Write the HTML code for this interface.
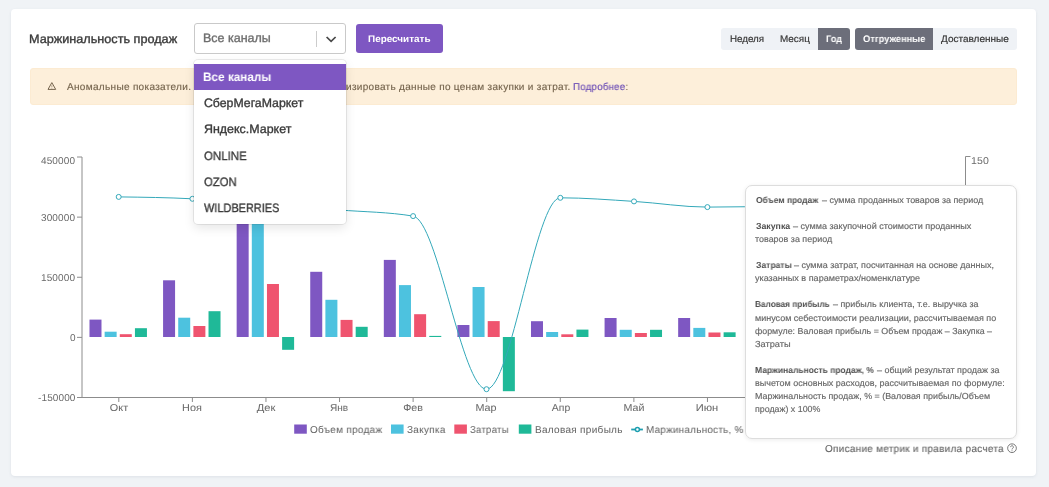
<!DOCTYPE html>
<html><head><meta charset="utf-8"><title>chart</title>
<style>
*{box-sizing:border-box;margin:0;padding:0}
html,body{width:1049px;height:487px;overflow:hidden;background:#f0f3f6;font-family:"Liberation Sans", sans-serif;}
.abs{position:absolute}
.card{position:absolute;left:11px;top:9px;width:1025px;height:466.5px;background:#fff;border-radius:4px;box-shadow:0 1px 3px rgba(60,80,110,.10)}
.t{position:absolute;white-space:nowrap;will-change:transform;text-rendering:geometricPrecision}
.select{position:absolute;left:194px;top:23px;width:152px;height:31px;border:1px solid #c9c9c9;border-radius:3px;background:#fff}
.sep{position:absolute;left:316px;top:31px;width:1px;height:16px;background:#ccc}
.btn{position:absolute;left:356px;top:24px;width:87px;height:29px;background:#7e57c2;border-radius:3px}
.menu{position:absolute;left:194px;top:60px;width:152px;height:164px;background:#fff;border-radius:4px;box-shadow:0 0 0 1px rgba(0,0,0,.08),0 4px 11px rgba(0,0,0,.1)}
.hl{position:absolute;left:194px;top:64px;width:152px;height:25.8px;background:#7e57c2}
.alert{position:absolute;left:30px;top:68px;width:987px;height:37px;background:#fdefda;border:1px solid #fcebd2;border-radius:3px}
.tg{position:absolute;top:28px;height:22px;background:#eff2f6}
.tg.on{background:#6c6e7a}
.tip{position:absolute;left:745px;top:185px;width:272px;height:254px;background:#fff;border:1px solid #ddd;border-radius:7px;box-shadow:0 1px 4px rgba(0,0,0,.08)}
svg{position:absolute;left:0;top:0}
</style></head><body>
<div class="card"></div>
<div class="alert"></div>
<div class="t" style="font-size:10px;letter-spacing:0.3px;-webkit-text-stroke:0.15px;left:67.40px;transform-origin:0 50%;transform:scaleX(1.0045);top:80.00px;line-height:15.0px;"><span style="color:#75644d;font-weight:400">Аномальные показатели.</span></div>
<div class="t" style="font-size:10px;letter-spacing:0.3px;-webkit-text-stroke:0.15px;right:701.88px;transform-origin:100% 50%;top:80.00px;line-height:15.0px;"><span style="color:#75644d;font-weight:400">Рекомендуем актуал</span></div>
<div class="t" style="font-size:10px;letter-spacing:0.3px;-webkit-text-stroke:0.15px;left:346.10px;transform-origin:0 50%;transform:scaleX(1.0011);top:80.00px;line-height:15.0px;"><span style="color:#75644d;font-weight:400">изировать данные по ценам закупки и затрат.</span></div>
<div class="t" style="font-size:10px;letter-spacing:0.3px;-webkit-text-stroke:0.15px;left:573.28px;transform-origin:0 50%;transform:scaleX(0.9614);top:80.00px;line-height:15.0px;"><span style="color:#6a4bb5;font-weight:400">Подробнее</span><span style="color:#75644d;font-weight:400">:</span></div>
<svg width="1049" height="487" viewBox="0 0 1049 487">
<rect x="89.49" y="319.60" width="12" height="17.40" fill="#7e57c2"/>
<rect x="104.64" y="331.70" width="12" height="5.30" fill="#4dc2df"/>
<rect x="119.79" y="334.20" width="12" height="2.80" fill="#ef546f"/>
<rect x="134.94" y="328.20" width="12" height="8.80" fill="#1fb998"/>
<rect x="163.07" y="280.30" width="12" height="56.70" fill="#7e57c2"/>
<rect x="178.22" y="317.70" width="12" height="19.30" fill="#4dc2df"/>
<rect x="193.38" y="326.00" width="12" height="11.00" fill="#ef546f"/>
<rect x="208.52" y="311.20" width="12" height="25.80" fill="#1fb998"/>
<rect x="236.66" y="150.00" width="12" height="187.00" fill="#7e57c2"/>
<rect x="251.81" y="165.00" width="12" height="172.00" fill="#4dc2df"/>
<rect x="266.96" y="284.00" width="12" height="53.00" fill="#ef546f"/>
<rect x="282.11" y="337.00" width="12" height="12.80" fill="#1fb998"/>
<rect x="310.24" y="271.80" width="12" height="65.20" fill="#7e57c2"/>
<rect x="325.39" y="299.80" width="12" height="37.20" fill="#4dc2df"/>
<rect x="340.54" y="319.90" width="12" height="17.10" fill="#ef546f"/>
<rect x="355.69" y="326.80" width="12" height="10.20" fill="#1fb998"/>
<rect x="383.82" y="259.90" width="12" height="77.10" fill="#7e57c2"/>
<rect x="398.97" y="285.10" width="12" height="51.90" fill="#4dc2df"/>
<rect x="414.12" y="314.20" width="12" height="22.80" fill="#ef546f"/>
<rect x="429.27" y="335.90" width="12" height="1.10" fill="#1fb998"/>
<rect x="457.41" y="325.00" width="12" height="12.00" fill="#7e57c2"/>
<rect x="472.56" y="287.00" width="12" height="50.00" fill="#4dc2df"/>
<rect x="487.71" y="321.10" width="12" height="15.90" fill="#ef546f"/>
<rect x="502.86" y="337.00" width="12" height="54.20" fill="#1fb998"/>
<rect x="530.99" y="321.20" width="12" height="15.80" fill="#7e57c2"/>
<rect x="546.14" y="332.00" width="12" height="5.00" fill="#4dc2df"/>
<rect x="561.29" y="334.30" width="12" height="2.70" fill="#ef546f"/>
<rect x="576.44" y="329.60" width="12" height="7.40" fill="#1fb998"/>
<rect x="604.58" y="318.00" width="12" height="19.00" fill="#7e57c2"/>
<rect x="619.73" y="329.80" width="12" height="7.20" fill="#4dc2df"/>
<rect x="634.88" y="333.00" width="12" height="4.00" fill="#ef546f"/>
<rect x="650.03" y="329.80" width="12" height="7.20" fill="#1fb998"/>
<rect x="678.16" y="318.00" width="12" height="19.00" fill="#7e57c2"/>
<rect x="693.31" y="327.90" width="12" height="9.10" fill="#4dc2df"/>
<rect x="708.46" y="332.50" width="12" height="4.50" fill="#ef546f"/>
<rect x="723.61" y="332.30" width="12" height="4.70" fill="#1fb998"/>
<path d="M118.70,196.90C143.27,197.22,167.83,197.53,192.40,198.80C216.93,200.06,241.47,202.63,266.00,204.50C290.50,206.37,315.00,208.07,339.50,210.00C364.03,211.93,388.57,212.03,413.10,216.10C437.57,220.16,462.03,389.20,486.50,389.20C511.10,389.20,535.70,197.80,560.30,197.80C584.87,197.80,609.43,199.85,634.00,201.40C658.47,202.95,682.93,207.10,707.40,207.10C731.93,207.10,756.47,206.55,781.00,206.00" fill="none" stroke="#33a8b9" stroke-width="1"/>
<circle cx="118.70" cy="196.90" r="2.5" fill="#fff" stroke="#33a8b9" stroke-width="1"/>
<circle cx="192.40" cy="198.80" r="2.5" fill="#fff" stroke="#33a8b9" stroke-width="1"/>
<circle cx="266.00" cy="204.50" r="2.5" fill="#fff" stroke="#33a8b9" stroke-width="1"/>
<circle cx="339.50" cy="210.00" r="2.5" fill="#fff" stroke="#33a8b9" stroke-width="1"/>
<circle cx="413.10" cy="216.10" r="2.5" fill="#fff" stroke="#33a8b9" stroke-width="1"/>
<circle cx="486.50" cy="389.20" r="2.5" fill="#fff" stroke="#33a8b9" stroke-width="1"/>
<circle cx="560.30" cy="197.80" r="2.5" fill="#fff" stroke="#33a8b9" stroke-width="1"/>
<circle cx="634.00" cy="201.40" r="2.5" fill="#fff" stroke="#33a8b9" stroke-width="1"/>
<circle cx="707.40" cy="207.10" r="2.5" fill="#fff" stroke="#33a8b9" stroke-width="1"/>
<circle cx="781.00" cy="206.00" r="2.5" fill="#fff" stroke="#33a8b9" stroke-width="1"/>
<path d="M77,157H82V397.5" fill="none" stroke="#8c8c8c" stroke-width="1"/>
<path d="M77,217.125H82" stroke="#8c8c8c" stroke-width="1"/>
<path d="M77,277.25H82" stroke="#8c8c8c" stroke-width="1"/>
<path d="M77,337.375H82" stroke="#8c8c8c" stroke-width="1"/>
<path d="M77,397.5H82" stroke="#8c8c8c" stroke-width="1"/>
<path d="M82,397.5H965.5" stroke="#8c8c8c" stroke-width="1"/>
<path d="M118.79,397.5V402" stroke="#8c8c8c" stroke-width="1"/>
<path d="M192.38,397.5V402" stroke="#8c8c8c" stroke-width="1"/>
<path d="M265.96,397.5V402" stroke="#8c8c8c" stroke-width="1"/>
<path d="M339.54,397.5V402" stroke="#8c8c8c" stroke-width="1"/>
<path d="M413.12,397.5V402" stroke="#8c8c8c" stroke-width="1"/>
<path d="M486.71,397.5V402" stroke="#8c8c8c" stroke-width="1"/>
<path d="M560.29,397.5V402" stroke="#8c8c8c" stroke-width="1"/>
<path d="M633.88,397.5V402" stroke="#8c8c8c" stroke-width="1"/>
<path d="M707.46,397.5V402" stroke="#8c8c8c" stroke-width="1"/>
<path d="M781.04,397.5V402" stroke="#8c8c8c" stroke-width="1"/>
<path d="M854.62,397.5V402" stroke="#8c8c8c" stroke-width="1"/>
<path d="M928.21,397.5V402" stroke="#8c8c8c" stroke-width="1"/>
<path d="M970.5,156.5H965.5V397.5" fill="none" stroke="#8c8c8c" stroke-width="1"/>
<rect x="294.2" y="424.5" width="12.6" height="9.2" fill="#7e57c2"/>
<rect x="391.0" y="424.5" width="12.6" height="9.2" fill="#4dc2df"/>
<rect x="454.3" y="424.5" width="12.6" height="9.2" fill="#ef546f"/>
<rect x="518.8" y="424.5" width="12.6" height="9.2" fill="#1fb998"/>
<path d="M631.2,429.5H642.9" stroke="#1d9fb0" stroke-width="1.8"/>
<circle cx="637.4" cy="429.5" r="2.0" fill="#fff" stroke="#1d9fb0" stroke-width="1.5"/>
<path d="M48.0,89.4L51.85,82.6L55.7,89.4Z" fill="none" stroke="#75644d" stroke-width="1" stroke-linejoin="round"/>
<path d="M51.85,85.2V87.3M51.85,87.9V88.5" stroke="#75644d" stroke-width="0.7" opacity="0.8"/>
</svg>
<div class="select"></div><div class="sep"></div>
<svg width="1049" height="487" viewBox="0 0 1049 487" style="pointer-events:none">
<path d="M327.2,37.6L331.1,41.4L335,37.6" fill="none" stroke="#484848" stroke-width="1.7" stroke-linecap="square" stroke-linejoin="miter"/>
<circle cx="1012" cy="448.2" r="4.35" fill="none" stroke="#6a6a6a" stroke-width="0.9"/>
<path d="M1010.6,447.1a1.4,1.4 0 1 1 2.2,1.15c-0.55,0.35 -0.8,0.6 -0.8,1.2M1012,450.4v0.8" fill="none" stroke="#6a6a6a" stroke-width="0.9"/>
</svg>
<div class="btn"></div>
<div class="tg" style="left:721px;width:97px;border-radius:3px 0 0 3px"></div>
<div class="tg on" style="left:818px;width:32px;border-radius:0 3px 3px 0"></div>
<div class="tg on" style="left:855px;width:78px;border-radius:3px 0 0 3px"></div>
<div class="tg" style="left:933px;width:84px;border-radius:0 3px 3px 0"></div>
<div class="tip"></div>
<div class="menu"></div><div class="hl"></div>
<div class="t" style="font-size:12.25px;-webkit-text-stroke:0.35px;left:29.23px;transform-origin:0 50%;transform:scaleX(1.0333);top:30.00px;line-height:18.375px;"><span style="color:#3a3a3a;font-weight:400">Маржинальность продаж</span></div>
<div class="t" style="font-size:12.25px;-webkit-text-stroke:0.35px;left:202.54px;transform-origin:0 50%;transform:scaleX(1.0200);top:29.00px;line-height:18.375px;"><span style="color:#6e6e6e;font-weight:400">Все каналы</span></div>
<div class="t" style="font-size:9.625px;left:367.88px;transform-origin:0 50%;transform:scaleX(1.0326);top:33.00px;line-height:14.438px;"><span style="color:#fff;font-weight:700">Пересчитать</span></div>
<div class="t" style="font-size:12.25px;left:203.18px;transform-origin:0 50%;transform:scaleX(0.9591);top:68.00px;line-height:18.375px;"><span style="color:#fff;font-weight:700">Все каналы</span></div>
<div class="t" style="font-size:12.25px;-webkit-text-stroke:0.35px;left:203.50px;transform-origin:0 50%;transform:scaleX(1.0030);top:94.00px;line-height:18.375px;"><span style="color:#3a3a3a;font-weight:400">СберМегаМаркет</span></div>
<div class="t" style="font-size:12.25px;-webkit-text-stroke:0.35px;left:203.65px;transform-origin:0 50%;transform:scaleX(1.0146);top:120.00px;line-height:18.375px;"><span style="color:#3a3a3a;font-weight:400">Яндекс.Маркет</span></div>
<div class="t" style="font-size:12.25px;-webkit-text-stroke:0.35px;left:203.53px;transform-origin:0 50%;transform:scaleX(0.9363);top:147.00px;line-height:18.375px;"><span style="color:#3a3a3a;font-weight:400">ONLINE</span></div>
<div class="t" style="font-size:12.25px;-webkit-text-stroke:0.35px;left:203.54px;transform-origin:0 50%;transform:scaleX(0.9235);top:173.00px;line-height:18.375px;"><span style="color:#3a3a3a;font-weight:400">OZON</span></div>
<div class="t" style="font-size:12.25px;-webkit-text-stroke:0.35px;left:204.22px;transform-origin:0 50%;transform:scaleX(0.8926);top:199.00px;line-height:18.375px;"><span style="color:#3a3a3a;font-weight:400">WILDBERRIES</span></div>
<div class="t" style="font-size:9.625px;-webkit-text-stroke:0.2px;left:729.84px;transform-origin:0 50%;transform:scaleX(1.0171);top:33.00px;line-height:14.438px;"><span style="color:#3a3a3a;font-weight:400">Неделя</span></div>
<div class="t" style="font-size:9.625px;-webkit-text-stroke:0.2px;left:780.13px;transform-origin:0 50%;transform:scaleX(1.0301);top:33.00px;line-height:14.438px;"><span style="color:#3a3a3a;font-weight:400">Месяц</span></div>
<div class="t" style="font-size:9.625px;left:826.22px;transform-origin:0 50%;transform:scaleX(0.9538);top:33.00px;line-height:14.438px;"><span style="color:#fff;font-weight:700">Год</span></div>
<div class="t" style="font-size:9.625px;left:863.22px;transform-origin:0 50%;transform:scaleX(0.9647);top:33.00px;line-height:14.438px;"><span style="color:#fff;font-weight:700">Отгруженные</span></div>
<div class="t" style="font-size:9.625px;-webkit-text-stroke:0.2px;left:941.20px;transform-origin:0 50%;transform:scaleX(1.0425);top:33.00px;line-height:14.438px;"><span style="color:#3a3a3a;font-weight:400">Доставленные</span></div>
<div class="t" style="font-size:10px;letter-spacing:0.12px;right:973.66px;transform-origin:100% 50%;top:154.00px;line-height:15.0px;"><span style="color:#6a6a6a;font-weight:400">450000</span></div>
<div class="t" style="font-size:10px;letter-spacing:0.12px;right:973.66px;transform-origin:100% 50%;top:211.00px;line-height:15.0px;"><span style="color:#6a6a6a;font-weight:400">300000</span></div>
<div class="t" style="font-size:10px;letter-spacing:0.12px;right:973.66px;transform-origin:100% 50%;top:271.00px;line-height:15.0px;"><span style="color:#6a6a6a;font-weight:400">150000</span></div>
<div class="t" style="font-size:10px;letter-spacing:0.12px;right:973.56px;transform-origin:100% 50%;top:331.00px;line-height:15.0px;"><span style="color:#6a6a6a;font-weight:400">0</span></div>
<div class="t" style="font-size:10px;letter-spacing:0.12px;right:973.45px;transform-origin:100% 50%;top:391.00px;line-height:15.0px;"><span style="color:#6a6a6a;font-weight:400">-150000</span></div>
<div class="t" style="font-size:10px;letter-spacing:0.12px;left:971.41px;transform-origin:0 50%;transform:scaleX(1.0540);top:154.00px;line-height:15.0px;"><span style="color:#6a6a6a;font-weight:400">150</span></div>
<div class="t" style="font-size:10px;-webkit-text-stroke:0.05px;left:118.58px;transform:translateX(-50%) scaleX(1.0831);top:401.00px;line-height:15.0px;"><span style="color:#6a6a6a;font-weight:400">Окт</span></div>
<div class="t" style="font-size:10px;-webkit-text-stroke:0.05px;left:192.35px;transform:translateX(-50%) scaleX(1.0866);top:401.00px;line-height:15.0px;"><span style="color:#6a6a6a;font-weight:400">Ноя</span></div>
<div class="t" style="font-size:10px;-webkit-text-stroke:0.05px;left:265.94px;transform:translateX(-50%) scaleX(1.1104);top:401.00px;line-height:15.0px;"><span style="color:#6a6a6a;font-weight:400">Дек</span></div>
<div class="t" style="font-size:10px;-webkit-text-stroke:0.05px;left:339.45px;transform:translateX(-50%) scaleX(0.9913);top:401.00px;line-height:15.0px;"><span style="color:#6a6a6a;font-weight:400">Янв</span></div>
<div class="t" style="font-size:10px;-webkit-text-stroke:0.05px;left:412.98px;transform:translateX(-50%) scaleX(1.0648);top:401.00px;line-height:15.0px;"><span style="color:#6a6a6a;font-weight:400">Фев</span></div>
<div class="t" style="font-size:10px;-webkit-text-stroke:0.05px;left:486.48px;transform:translateX(-50%) scaleX(1.0757);top:401.00px;line-height:15.0px;"><span style="color:#6a6a6a;font-weight:400">Мар</span></div>
<div class="t" style="font-size:10px;-webkit-text-stroke:0.05px;left:560.50px;transform:translateX(-50%) scaleX(1.0377);top:401.00px;line-height:15.0px;"><span style="color:#6a6a6a;font-weight:400">Апр</span></div>
<div class="t" style="font-size:10px;-webkit-text-stroke:0.05px;left:633.79px;transform:translateX(-50%) scaleX(1.0685);top:401.00px;line-height:15.0px;"><span style="color:#6a6a6a;font-weight:400">Май</span></div>
<div class="t" style="font-size:10px;-webkit-text-stroke:0.05px;left:707.44px;transform:translateX(-50%) scaleX(1.1147);top:401.00px;line-height:15.0px;"><span style="color:#6a6a6a;font-weight:400">Июн</span></div>
<div class="t" style="font-size:10px;letter-spacing:0.3px;-webkit-text-stroke:0.05px;left:310.00px;transform-origin:0 50%;transform:scaleX(0.9951);top:423.00px;line-height:15.0px;"><span style="color:#666;font-weight:400">Объем продаж</span></div>
<div class="t" style="font-size:10px;letter-spacing:0.3px;-webkit-text-stroke:0.05px;left:406.75px;transform-origin:0 50%;transform:scaleX(0.9935);top:423.00px;line-height:15.0px;"><span style="color:#666;font-weight:400">Закупка</span></div>
<div class="t" style="font-size:10px;letter-spacing:0.3px;-webkit-text-stroke:0.05px;left:470.06px;transform-origin:0 50%;transform:scaleX(0.9544);top:423.00px;line-height:15.0px;"><span style="color:#666;font-weight:400">Затраты</span></div>
<div class="t" style="font-size:10px;letter-spacing:0.3px;-webkit-text-stroke:0.05px;left:534.75px;transform-origin:0 50%;transform:scaleX(1.0006);top:423.00px;line-height:15.0px;"><span style="color:#666;font-weight:400">Валовая прибыль</span></div>
<div class="t" style="font-size:10px;letter-spacing:0.3px;-webkit-text-stroke:0.05px;left:646.16px;transform-origin:0 50%;transform:scaleX(0.9816);top:423.00px;line-height:15.0px;"><span style="color:#666;font-weight:400">Маржинальность, %</span></div>
<div class="t" style="font-size:10px;letter-spacing:0.3px;-webkit-text-stroke:0.15px;left:824.55px;transform-origin:0 50%;transform:scaleX(0.9930);top:442.00px;line-height:15.0px;"><span style="color:#666;font-weight:400">Описание метрик и правила расчета</span></div>
<div class="t" style="font-size:8.75px;left:755.66px;transform-origin:0 50%;transform:scaleX(0.9612);top:194.00px;line-height:13.125px;"><span style="color:#505050;font-weight:700">Объем продаж</span></div>
<div class="t" style="font-size:8.75px;-webkit-text-stroke:0.15px;left:821.50px;transform-origin:0 50%;transform:scaleX(1.0225);top:194.00px;line-height:13.125px;"><span style="color:#666666;font-weight:400">– сумма проданных товаров за период</span></div>
<div class="t" style="font-size:8.75px;left:755.65px;transform-origin:0 50%;transform:scaleX(0.9912);top:220.00px;line-height:13.125px;"><span style="color:#505050;font-weight:700">Закупка</span></div>
<div class="t" style="font-size:8.75px;-webkit-text-stroke:0.15px;left:793.00px;transform-origin:0 50%;transform:scaleX(1.0330);top:220.00px;line-height:13.125px;"><span style="color:#666666;font-weight:400">– сумма закупочной стоимости проданных</span></div>
<div class="t" style="font-size:8.75px;-webkit-text-stroke:0.15px;left:755.10px;transform-origin:0 50%;transform:scaleX(1.0225);top:233.00px;line-height:13.125px;"><span style="color:#666666;font-weight:400">товаров за период</span></div>
<div class="t" style="font-size:8.75px;left:755.66px;transform-origin:0 50%;transform:scaleX(0.9790);top:259.00px;line-height:13.125px;"><span style="color:#505050;font-weight:700">Затраты</span></div>
<div class="t" style="font-size:8.75px;-webkit-text-stroke:0.15px;left:794.00px;transform-origin:0 50%;transform:scaleX(1.0260);top:259.00px;line-height:13.125px;"><span style="color:#666666;font-weight:400">– сумма затрат, посчитанная на основе данных,</span></div>
<div class="t" style="font-size:8.75px;-webkit-text-stroke:0.15px;left:755.10px;transform-origin:0 50%;transform:scaleX(1.0349);top:272.00px;line-height:13.125px;"><span style="color:#666666;font-weight:400">указанных в параметрах/номенклатуре</span></div>
<div class="t" style="font-size:8.75px;left:755.43px;transform-origin:0 50%;transform:scaleX(0.9397);top:298.00px;line-height:13.125px;"><span style="color:#505050;font-weight:700">Валовая прибыль</span></div>
<div class="t" style="font-size:8.75px;-webkit-text-stroke:0.15px;left:832.60px;transform-origin:0 50%;transform:scaleX(1.0214);top:298.00px;line-height:13.125px;"><span style="color:#666666;font-weight:400">– прибыль клиента, т.е. выручка за</span></div>
<div class="t" style="font-size:8.75px;-webkit-text-stroke:0.15px;left:754.59px;transform-origin:0 50%;transform:scaleX(1.0284);top:312.00px;line-height:13.125px;"><span style="color:#666666;font-weight:400">минусом себестоимости реализации, рассчитываемая по</span></div>
<div class="t" style="font-size:8.75px;-webkit-text-stroke:0.15px;left:754.85px;transform-origin:0 50%;transform:scaleX(1.0113);top:325.00px;line-height:13.125px;"><span style="color:#666666;font-weight:400">формуле: Валовая прибыль = Объем продаж – Закупка –</span></div>
<div class="t" style="font-size:8.75px;-webkit-text-stroke:0.15px;left:754.84px;transform-origin:0 50%;transform:scaleX(1.0545);top:338.00px;line-height:13.125px;"><span style="color:#666666;font-weight:400">Затраты</span></div>
<div class="t" style="font-size:8.75px;left:755.42px;transform-origin:0 50%;transform:scaleX(0.9680);top:364.00px;line-height:13.125px;"><span style="color:#505050;font-weight:700">Маржинальность продаж, %</span></div>
<div class="t" style="font-size:8.75px;-webkit-text-stroke:0.15px;left:876.60px;transform-origin:0 50%;transform:scaleX(1.0238);top:364.00px;line-height:13.125px;"><span style="color:#666666;font-weight:400">– общий результат продаж за</span></div>
<div class="t" style="font-size:8.75px;-webkit-text-stroke:0.15px;left:754.59px;transform-origin:0 50%;transform:scaleX(1.0254);top:377.00px;line-height:13.125px;"><span style="color:#666666;font-weight:400">вычетом основных расходов, рассчитываемая по формуле:</span></div>
<div class="t" style="font-size:8.75px;-webkit-text-stroke:0.15px;left:754.59px;transform-origin:0 50%;transform:scaleX(1.0174);top:390.00px;line-height:13.125px;"><span style="color:#666666;font-weight:400">Маржинальность продаж, % = (Валовая прибыль/Объем</span></div>
<div class="t" style="font-size:8.75px;-webkit-text-stroke:0.15px;left:754.59px;transform-origin:0 50%;transform:scaleX(1.0109);top:403.00px;line-height:13.125px;"><span style="color:#666666;font-weight:400">продаж) x 100%</span></div>
</body></html>
